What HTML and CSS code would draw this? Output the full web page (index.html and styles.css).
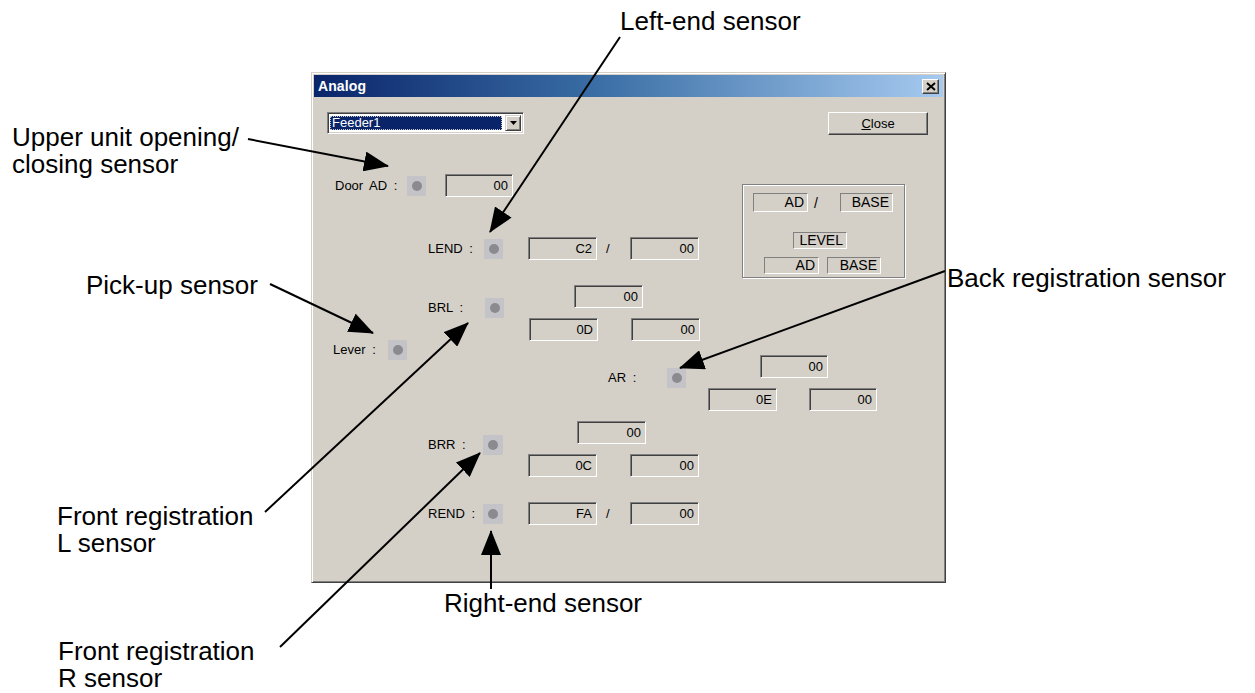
FILE: index.html
```html
<!DOCTYPE html>
<html>
<head>
<meta charset="utf-8">
<title>Analog</title>
<link rel="stylesheet" href="styles.css">
</head>
<body>
<div class="stage">

  <div class="dialog">
    <div class="titlebar">
      <span class="title">Analog</span>
      <span class="xbtn"><svg width="10" height="9" viewBox="0 0 10 9"><path d="M1,1 L9,8 M9,1 L1,8" stroke="#000" stroke-width="2" fill="none"/></svg></span>
    </div>
    <div class="client">
      <div class="toolbar">
        <div class="combo">
          <div class="combo-field"><span class="combo-sel">Feeder1</span></div>
          <div class="combo-btn"><svg width="7" height="4" viewBox="0 0 7 4"><path d="M0,0 L7,0 L3.5,4 Z" fill="#000"/></svg></div>
        </div>
        <div class="btn"><u>C</u>lose</div>
      </div>

      <div class="sensor door">
        <span class="lab w72">Door AD :</span><span class="led"></span><span class="field f68 ml19">00</span>
      </div>

      <div class="sensor lend">
        <span class="lab w56">LEND :</span><span class="led"></span><span class="field ml25">C2</span><span class="slash">/</span><span class="field">00</span>
      </div>

      <div class="levelbox">
        <div class="lrow r1"><span class="sfield w55">AD</span><span class="sslash">/</span><span class="sfield w53">BASE</span></div>
        <div class="lrow r2"><span class="sfield w54 h17">LEVEL</span></div>
        <div class="lrow r3"><span class="sfield w55 h16">AD</span><span class="sfield w54 h16 ml8">BASE</span></div>
      </div>

      <div class="sensor2 brl">
        <div class="li"><span class="lab w57">BRL :</span><span class="led"></span></div>
        <div class="boxes ml25">
          <span class="field top45">00</span>
          <div class="pair"><span class="field">0D</span><span class="field">00</span></div>
        </div>
      </div>

      <div class="sensor lever">
        <span class="lab w55">Lever :</span><span class="led"></span>
      </div>

      <div class="sensor2 ar">
        <div class="li"><span class="lab w59">AR :</span><span class="led"></span></div>
        <div class="boxes ml22">
          <span class="field top52 f68">00</span>
          <div class="pair g32"><span class="field">0E</span><span class="field f68">00</span></div>
        </div>
      </div>

      <div class="sensor2 brr">
        <div class="li mt14"><span class="lab w55">BRR :</span><span class="led w20"></span></div>
        <div class="boxes ml25">
          <span class="field top49">00</span>
          <div class="pair"><span class="field">0C</span><span class="field">00</span></div>
        </div>
      </div>

      <div class="sensor rend">
        <span class="lab w55">REND :</span><span class="led w20"></span><span class="field ml25">FA</span><span class="slash">/</span><span class="field">00</span>
      </div>
    </div>
  </div>

  <div class="callout c-left">Left-end sensor</div>
  <div class="callout c-upper">Upper unit opening/<br>closing sensor</div>
  <div class="callout c-pick">Pick-up sensor</div>
  <div class="callout c-back">Back registration sensor</div>
  <div class="callout c-frl">Front registration<br>L sensor</div>
  <div class="callout c-right">Right-end sensor</div>
  <div class="callout c-frr">Front registration<br>R sensor</div>

  <svg class="arrows" width="1255" height="693" viewBox="0 0 1255 693">
    <defs>
      <marker id="ah" markerWidth="25" markerHeight="20" refX="24" refY="10" orient="auto" markerUnits="userSpaceOnUse">
        <path d="M0,0 L25,10 L0,20 Z" fill="#000"/>
      </marker>
    </defs>
    <g stroke="#000" stroke-width="2" fill="none">
      <line x1="248" y1="139" x2="388" y2="166" marker-end="url(#ah)"/>
      <line x1="620" y1="37" x2="490" y2="232" marker-end="url(#ah)"/>
      <line x1="270" y1="284" x2="373" y2="333" marker-end="url(#ah)"/>
      <line x1="265" y1="512" x2="468" y2="323" marker-end="url(#ah)"/>
      <line x1="945" y1="271" x2="680" y2="368" marker-end="url(#ah)"/>
      <line x1="280" y1="647" x2="480" y2="453" marker-end="url(#ah)"/>
      <line x1="491" y1="589" x2="491" y2="531" marker-end="url(#ah)"/>
    </g>
  </svg>
</div>
</body>
</html>
```
FILE: styles.css
```css
* { box-sizing: border-box; }
html, body { margin: 0; padding: 0; background: #fff; }
body { font-family: "Liberation Sans", Arial, sans-serif; color: #000; }

.stage { position: relative; width: 1255px; height: 693px; overflow: hidden; }

/* ---------- dialog window ---------- */
.dialog {
  position: absolute; left: 311px; top: 72px;
  width: 635px; height: 511px;
  background: #d4d0c8;
  border: 1px solid; border-color: #d4d0c8 #404040 #404040 #d4d0c8;
  box-shadow: inset 1px 1px 0 #fff, inset -1px -1px 0 #808080;
  padding: 2px;
  display: flex; flex-direction: column;
}
.titlebar {
  height: 22px; flex: none;
  background: linear-gradient(90deg, #0a246a 0%, #3a6ea5 45%, #a6caf0 100%);
  display: flex; align-items: center; justify-content: space-between;
  padding: 0 4px 0 4px;
}
.title { color: #fff; font-weight: bold; font-size: 14px; letter-spacing: 0.1px; }
.xbtn {
  width: 17px; height: 15px; background: #d4d0c8;
  border: 1px solid; border-color: #fff #404040 #404040 #fff;
  box-shadow: inset -1px -1px 0 #808080;
  display: flex; align-items: center; justify-content: center;
}
.client { position: relative; flex: 1; font-size: 13px; }

/* toolbar */
.toolbar { display: flex; justify-content: space-between; padding: 15px 15px 0 13px; }
.combo {
  width: 197px; height: 22px; background: #fff;
  border: 1px solid; border-color: #808080 #fff #fff #808080;
  box-shadow: inset 1px 1px 0 #404040, inset -1px -1px 0 #d4d0c8;
  padding: 2px; display: flex;
}
.combo-field { flex: 1; padding: 1px 3px 1px 0; display: flex; }
.combo-sel {
  flex: 1; background: #0a246a; color: #fff;
  outline: 1px dotted #c8c8c8; outline-offset: -1px;
  font-size: 13px; line-height: 14px; padding-left: 2px;
}
.combo-btn {
  width: 16px; flex: none; background: #d4d0c8;
  border: 1px solid; border-color: #d4d0c8 #404040 #404040 #d4d0c8;
  box-shadow: inset 1px 1px 0 #fff, inset -1px -1px 0 #808080;
  display: flex; align-items: center; justify-content: center;
}
.btn {
  width: 100px; height: 23px; background: #d4d0c8;
  border: 1px solid; border-color: #fff #404040 #404040 #fff;
  box-shadow: inset -1px -1px 0 #808080;
  display: flex; align-items: center; justify-content: center;
  font-size: 13px;
}
.btn u { text-decoration: underline; }

/* sensors – placed where the physical sensor sits */
.sensor, .sensor2 { position: absolute; display: flex; }
.sensor { align-items: center; }
.sensor2 { align-items: flex-start; }
.door  { left: 21px;  top: 77px; }
.lend  { left: 114px; top: 140px; }
.brl   { left: 114px; top: 188px; }
.lever { left: 19px;  top: 243px; }
.ar    { left: 294px; top: 258px; }
.brr   { left: 114px; top: 324px; }
.rend  { left: 114px; top: 405px; }

.lab { display: inline-block; font-size: 13px; word-spacing: 3px; white-space: nowrap; line-height: 16px; }
.w55 { width: 55px; } .w56 { width: 56px; } .w57 { width: 57px; } .w59 { width: 59px; } .w72 { width: 72px; }

.led {
  width: 19px; height: 20px; flex: none;
  background: #c4c4c8;
  display: flex; align-items: center; justify-content: center;
}
.led.w20 { width: 20px; }
.led::after { content: ""; width: 10px; height: 10px; border-radius: 50%; background: #8a8a8f; }

.li { display: flex; align-items: center; margin-top: 13px; }
.li.mt14 { margin-top: 14px; }
.boxes { display: flex; flex-direction: column; }
.pair { display: flex; gap: 33px; margin-top: 10px; }
.pair.g32 { gap: 32px; }
.top45 { margin-left: 45px; } .top49 { margin-left: 49px; } .top52 { margin-left: 52px; }
.ml19 { margin-left: 19px; } .ml22 { margin-left: 22px; } .ml25 { margin-left: 25px; } .ml8 { margin-left: 8px; }

.field {
  display: block; width: 69px; height: 23px; flex: none;
  border: 1px solid; border-color: #808080 #fff #fff #808080;
  box-shadow: inset 1px 1px 0 #404040, inset -1px -1px 0 #d4d0c8;
  text-align: right; padding-right: 4px;
  font-size: 13px; line-height: 21px; color: #000;
}
.field.f68 { width: 68px; }
.slash { width: 33px; padding-left: 9px; font-size: 13px; }

/* level group box */
.levelbox {
  position: absolute; left: 428px; top: 87px; width: 163px; height: 94px;
  border: 1px solid #808080;
  box-shadow: inset 1px 1px 0 #fff, 1px 1px 0 #fff;
}
.lrow { display: flex; align-items: center; }
.r1 { margin: 8px 0 0 10px; }
.r2 { margin: 20px 0 0 50px; }
.r3 { margin: 8px 0 0 21px; }
.sfield {
  display: block; height: 19px; flex: none;
  border: 1px solid; border-color: #808080 #fff #fff #808080;
  text-align: right; padding-right: 3px;
  font-size: 14px; line-height: 17px;
}
.sfield.h17 { height: 17px; line-height: 15px; }
.sfield.h16 { height: 17px; line-height: 15px; }
.w53 { width: 53px; } .w54 { width: 54px; } .w55 { width: 55px; }
.sslash { width: 32px; padding-left: 6px; font-size: 14px; }

/* callouts */
.callout { position: absolute; font-size: 26px; line-height: 27px; white-space: nowrap; color: #000; z-index: 3; }
.c-left  { left: 620px; top: 8px; }
.c-upper { left: 12px;  top: 124px; }
.c-pick  { left: 86px;  top: 272px; }
.c-back  { left: 947px; top: 265px; }
.c-frl   { left: 57px;  top: 503px; }
.c-right { left: 444px; top: 590px; }
.c-frr   { left: 58px;  top: 638px; }

.arrows { position: absolute; left: 0; top: 0; z-index: 4; pointer-events: none; }
```
